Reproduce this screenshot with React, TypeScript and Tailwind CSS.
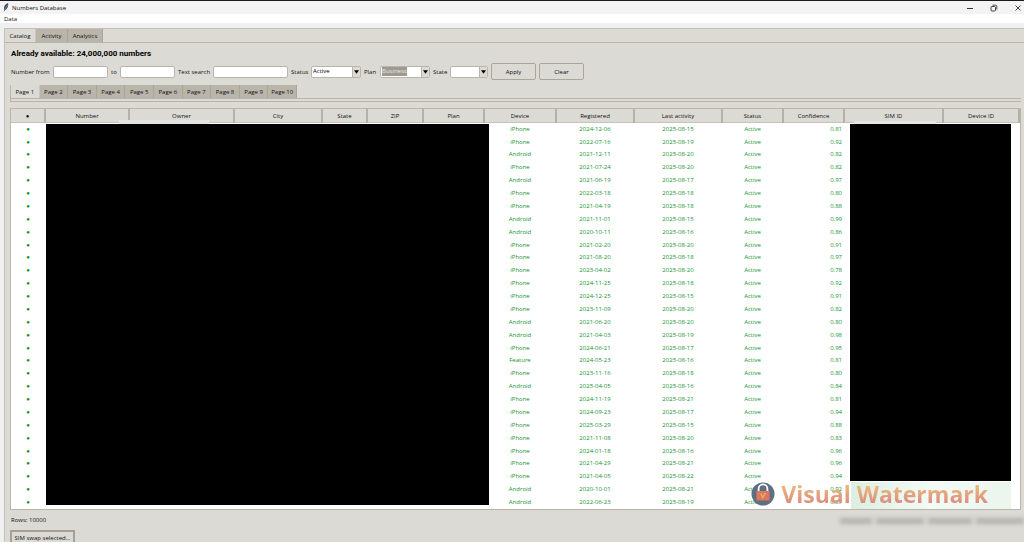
import React from "react";
import { clsx } from "clsx";

const columns = [
  { label: "●", width: "w-[34px]" },
  { label: "Number", width: "w-[84px]" },
  { label: "Owner", width: "w-[105px]" },
  { label: "City", width: "w-[88px]" },
  { label: "State", width: "w-[45px]" },
  { label: "ZIP", width: "w-[56px]" },
  { label: "Plan", width: "w-[61px]" },
  { label: "Device", width: "w-[72px]" },
  { label: "Registered", width: "w-[78px]" },
  { label: "Last activity", width: "w-[88px]" },
  { label: "Status", width: "w-[61px]" },
  { label: "Confidence", width: "w-[61px]" },
  { label: "SIM ID", width: "w-[99px]" },
  { label: "Device ID", width: "w-auto" },
];

const rows: [string, string, string, string][] = [
  ["iPhone", "2024-12-06", "2025-08-15", "0.81"],
  ["iPhone", "2022-07-16", "2025-08-19", "0.92"],
  ["Android", "2021-12-11", "2025-08-20", "0.82"],
  ["iPhone", "2021-07-24", "2025-08-20", "0.82"],
  ["Android", "2021-06-19", "2025-08-17", "0.97"],
  ["iPhone", "2022-03-18", "2025-08-18", "0.80"],
  ["iPhone", "2021-04-19", "2025-08-18", "0.88"],
  ["Android", "2021-11-01", "2025-08-15", "0.99"],
  ["Android", "2020-10-11", "2025-08-16", "0.86"],
  ["iPhone", "2021-02-20", "2025-08-20", "0.91"],
  ["iPhone", "2021-08-20", "2025-08-18", "0.97"],
  ["iPhone", "2023-04-02", "2025-08-20", "0.78"],
  ["iPhone", "2024-11-25", "2025-08-18", "0.92"],
  ["iPhone", "2024-12-25", "2025-08-15", "0.91"],
  ["iPhone", "2023-11-09", "2025-08-20", "0.82"],
  ["Android", "2021-06-20", "2025-08-20", "0.80"],
  ["Android", "2021-04-03", "2025-08-19", "0.98"],
  ["iPhone", "2024-06-21", "2025-08-17", "0.95"],
  ["Feature", "2024-05-23", "2025-08-16", "0.81"],
  ["iPhone", "2023-11-16", "2025-08-18", "0.80"],
  ["Android", "2025-04-05", "2025-08-16", "0.84"],
  ["iPhone", "2024-11-19", "2025-08-21", "0.81"],
  ["iPhone", "2024-09-23", "2025-08-17", "0.94"],
  ["iPhone", "2025-03-29", "2025-08-15", "0.88"],
  ["iPhone", "2021-11-08", "2025-08-20", "0.83"],
  ["iPhone", "2024-01-18", "2025-08-16", "0.96"],
  ["iPhone", "2021-04-29", "2025-08-21", "0.96"],
  ["iPhone", "2021-04-05", "2025-08-22", "0.94"],
  ["Android", "2020-10-01", "2025-08-21", "0.92"],
  ["Android", "2022-06-23", "2025-08-19", "0.87"],
];

const pages = [1, 2, 3, 4, 5, 6, 7, 8, 9, 10];

function Tab({ active, className, children }: { active?: boolean; className?: string; children: React.ReactNode }) {
  return (
    <button
      type="button"
      role="tab"
      aria-selected={!!active}
      className={clsx(
        "h-[13px] shrink-0 border-r pt-px whitespace-nowrap",
        active ? "border-[#c9c7c2] bg-[#dcdad5]" : "border-[#a9a598] bg-[#bab5ab]",
        className,
      )}
    >
      {children}
    </button>
  );
}

function Label({ htmlFor, children }: { htmlFor: string; children: string }) {
  return (
    <label htmlFor={htmlFor} className="pt-px">
      {children}
    </label>
  );
}

function TextBox({ id }: { id: string }) {
  return <input id={id} type="text" className="h-3 w-full rounded-xs border border-[#bab5ab] bg-white px-0.5 outline-none" />;
}

function ComboBox({ id, options, highlighted }: { id: string; options: string[]; highlighted?: boolean }) {
  return (
    <div className="flex h-3 items-center rounded-xs border border-[#bab5ab] bg-white">
      <div className="flex min-w-0 flex-1 pl-px">
        <select
          id={id}
          className={clsx(
            "h-[9px] appearance-none leading-[9px] outline-none",
            highlighted ? "w-[25px] bg-[#9e9a91] text-[#e8e6e2]" : "w-full text-black",
          )}
        >
          {options.map((o) => (
            <option key={o}>{o}</option>
          ))}
        </select>
      </div>
      <span className="pointer-events-none flex h-full w-2 items-center justify-center border-l border-[#bab5ab] bg-[#dcdad5]">
        <svg viewBox="0 0 6 4" className="h-1 w-[5px] shrink-0">
          <path d="M0 0H6L3 4Z" fill="#000" />
        </svg>
      </span>
    </div>
  );
}

function Watermark() {
  return (
    <div className="pointer-events-none absolute right-8 bottom-px flex h-[29px] items-center gap-1.5">
      <svg viewBox="0 0 24 24" className="size-6">
        <circle cx="12" cy="12" r="11.5" fill="#5f6f83" />
        <path d="M7.6 9V6.8a4.4 4.4 0 0 1 8.8 0V9" fill="none" stroke="#fff" strokeWidth="1.8" />
        <path d="M5.5 9h13v9.5h-13z" fill="#dd7860" />
        <path d="M9.8 11.5l2 4.5 2-4.5h1.2" fill="none" stroke="#f0b45e" strokeWidth="1.1" />
      </svg>
      <span className="bg-linear-to-b from-[#ecb878] from-20% to-[#dc8f80] to-80% bg-clip-text font-['Open_Sans',sans-serif] text-[23px] leading-7 font-bold whitespace-nowrap text-transparent">
        Visual Watermark
      </span>
    </div>
  );
}

export default function App() {
  return (
    <div className="flex h-screen flex-col overflow-hidden border-t border-[#1c1820] bg-[#f0f0f1] font-['Open_Sans','Noto_Sans',sans-serif] text-[6px] leading-[9px] text-[#101010]">
      <header className="flex h-[13px] shrink-0 items-center bg-[#f3f3f3] pl-[3px]">
        <svg viewBox="0 0 6 10" className="h-[9px] w-1.5">
          <path d="M5.5 0C2 1 .2 4 1 7.5L.5 10l1-1.8C4.500 7 5.800 3.500 5.500 0Z" fill="#3b4a5c" />
          <path d="M4.500 2L1.500 7.500" stroke="#9db4cc" strokeWidth=".6" />
        </svg>
        <h1 className="ml-[3px] flex-1 pt-px">Numbers Database</h1>
        <div className="flex gap-3">
          <button type="button" aria-label="Minimize" className="flex w-3 justify-center">
            <svg viewBox="0 0 8 8" className="size-2"><path d="M1 4.500H7" stroke="#333" /></svg>
          </button>
          <button type="button" aria-label="Restore" className="flex w-3 justify-center">
            <svg viewBox="0 0 8 8" className="size-2" fill="none" stroke="#333" strokeWidth=".9">
              <rect x="1" y="2.500" width="4.500" height="4.500" rx="1" />
              <path d="M2.500 1.200H5.500A1.300 1.300 0 0 1 6.800 2.500V5.500" />
            </svg>
          </button>
          <button type="button" aria-label="Close" className="flex w-3 justify-center">
            <svg viewBox="0 0 8 8" className="size-2"><path d="M1.500 1.500L6.500 6.500M6.500 1.500L1.500 6.500" stroke="#333" strokeWidth=".9" /></svg>
          </button>
        </div>
      </header>
      <nav className="flex h-[9px] shrink-0 items-center bg-white pl-1">
        <button type="button" className="pt-px">Data</button>
      </nav>

      <main className="mt-[5px] ml-1 flex-1 border-t border-l border-[#c3c0b9] bg-[#dcdad5]">
        <div role="tablist" className="flex border-b border-[#bab5ab]">
          <Tab active className="w-[31px]">Catalog</Tab>
          <Tab className="w-[32px]">Activity</Tab>
          <Tab className="w-[35px]">Analytics</Tab>
        </div>

        <div className="pr-[3px] pl-[5px]">
          <h2 className="mt-[5px] pl-px font-[Roboto,sans-serif] text-[8px] leading-[11px] font-bold text-black">Already available: 24,000,000 numbers</h2>

          <form
            onSubmit={(e) => e.preventDefault()}
            className="mt-1 grid grid-cols-[39px_55px_6px_55px_32px_75px_17px_50px_13px_50px_14px_38px_45px_45px] items-center gap-x-[3px] pl-px whitespace-nowrap"
          >
            <Label htmlFor="from">Number from</Label>
            <TextBox id="from" />
            <Label htmlFor="to">to</Label>
            <TextBox id="to" />
            <Label htmlFor="search">Text search</Label>
            <TextBox id="search" />
            <Label htmlFor="status">Status</Label>
            <ComboBox id="status" options={["Active"]} />
            <Label htmlFor="plan">Plan</Label>
            <ComboBox id="plan" options={["Business"]} highlighted />
            <Label htmlFor="state">State</Label>
            <ComboBox id="state" options={[""]} />
            <button type="submit" className="h-[17px] rounded-xs border border-[#aaa69c] bg-[#dcdad5] pt-px">Apply</button>
            <button type="reset" className="h-[17px] rounded-xs border border-[#aaa69c] bg-[#dcdad5] pt-px">Clear</button>
          </form>

          <div role="tablist" className="mt-[5px] border-b border-l border-[#bab5ab]">
            <div className="grid w-[286px] grid-cols-10">
              {pages.map((p) => (
                <Tab key={p} active={p === 1}>
                  Page {p}
                </Tab>
              ))}
            </div>
          </div>
          <div className="h-[3px] border-b border-l border-[#bab5ab]" />

          <section className="relative mt-1.5 border border-[#bab5ab] bg-white">
            <table className="h-[400px] w-full table-fixed border-collapse">
              <colgroup>
                {columns.map((c) => (
                  <col key={c.label} className={c.width} />
                ))}
              </colgroup>
              <thead>
                <tr className="h-[13px] bg-[#dcdad5]">
                  {columns.map((c) => (
                    <th key={c.label} scope="col" className="border-r-2 border-b border-r-[#b5b1a6] border-b-[#c6c3bc] p-0 pt-0.5 font-normal">
                      {c.label}
                    </th>
                  ))}
                </tr>
              </thead>
              <tbody className="text-center text-[#12932f]">
                {rows.map(([device, registered, last, confidence], i) => (
                  <tr key={i}>
                    <td className="p-0 text-[#0d8f22]">●</td>
                    <td colSpan={6} className="p-0" />
                    <td className="p-0">{device}</td>
                    <td className="p-0">{registered}</td>
                    <td className="p-0">{last}</td>
                    <td className="p-0">Active</td>
                    <td className="p-0 pr-0.5 text-right">{confidence}</td>
                    <td colSpan={2} className="p-0" />
                  </tr>
                ))}
              </tbody>
            </table>
            <div className="absolute top-[11px] left-[108px] h-1 w-[90px] bg-[#e4e4e0]" />
            <div className="absolute top-3 right-[84px] h-[3px] w-[82px] bg-[#e4e6e1]" />
            <div className="absolute top-[15px] bottom-1 left-[35px] w-[443px] bg-black" />
            <div className="absolute top-[15px] right-[9px] bottom-[28px] w-[161px] bg-black" />
            <div className="absolute right-[9px] bottom-0 h-[27px] w-[160px] bg-linear-to-r from-[#dcefe2] via-[#f4faf6] to-[#dcefe2]/60" />
            <Watermark />
          </section>

          <div className="flex items-center justify-between pt-1.5">
            <p className="pl-px">Rows: 10000</p>
            <div aria-hidden="true" className="mr-[-3px] flex gap-1 opacity-50 blur-[2px]">
              <span className="h-1.5 w-8 bg-[#8f8d89]" />
              <span className="h-1.5 w-12 bg-[#8f8d89]" />
              <span className="h-1.5 w-11 bg-[#8f8d89]" />
              <span className="h-1.5 w-12 bg-[#8f8d89]" />
            </div>
          </div>
          <button type="button" className="mt-[5px] h-4 w-[65px] border-2 border-[#a5a198] bg-[#dcdad5] whitespace-nowrap">
            SIM swap selected...
          </button>
        </div>
      </main>
    </div>
  );
}
